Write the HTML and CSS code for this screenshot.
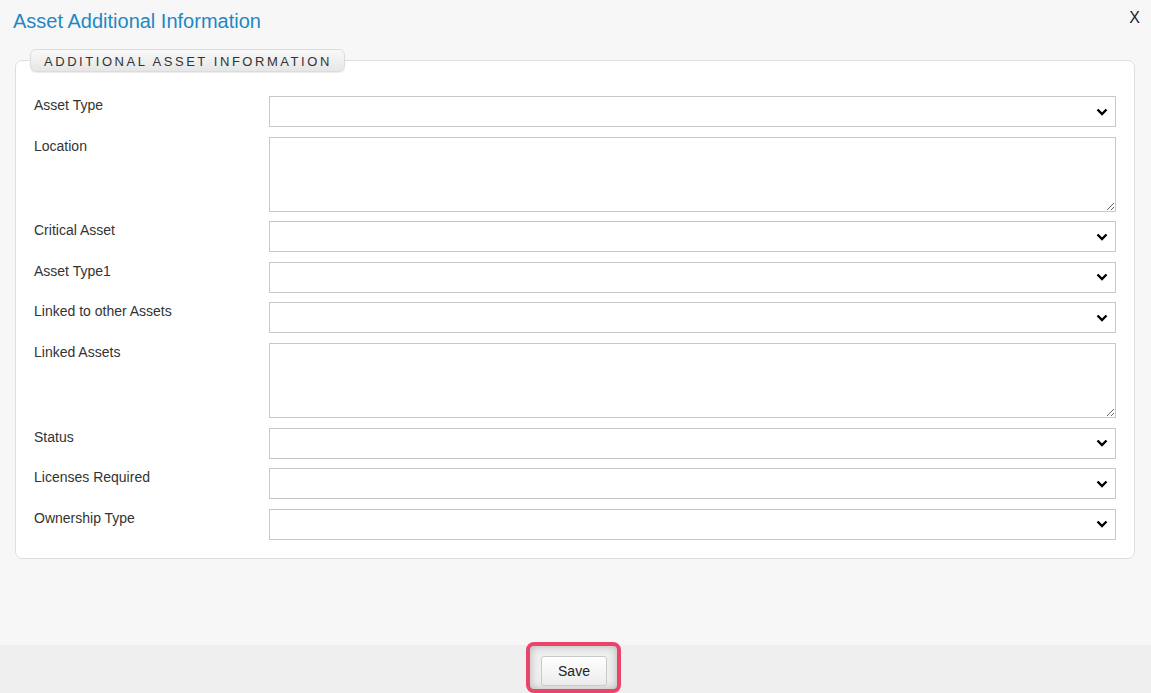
FILE: index.html
```html
<!DOCTYPE html>
<html lang="en">
<head>
    <meta charset="UTF-8">
    <title>Asset Additional Information</title>
    <link rel="stylesheet" href="styles.css">
</head>
<body>
    <div class="dialog">
        <div class="dialog-header">
            <h1 class="dialog-title">Asset Additional Information</h1>
            <span class="close">X</span>
        </div>

        <div class="dialog-body">
            <fieldset class="group">
                <legend>Additional Asset Information</legend>

                <div class="row">
                    <label>Asset Type</label>
                    <select><option></option></select>
                </div>
                <div class="row">
                    <label>Location</label>
                    <textarea></textarea>
                </div>
                <div class="row">
                    <label>Critical Asset</label>
                    <select><option></option></select>
                </div>
                <div class="row">
                    <label>Asset Type1</label>
                    <select><option></option></select>
                </div>
                <div class="row">
                    <label>Linked to other Assets</label>
                    <select><option></option></select>
                </div>
                <div class="row">
                    <label>Linked Assets</label>
                    <textarea></textarea>
                </div>
                <div class="row">
                    <label>Status</label>
                    <select><option></option></select>
                </div>
                <div class="row">
                    <label>Licenses Required</label>
                    <select><option></option></select>
                </div>
                <div class="row">
                    <label>Ownership Type</label>
                    <select><option></option></select>
                </div>
            </fieldset>
        </div>

        <!-- pie con el boton de guardar -->
        <div class="dialog-footer">
            <span class="highlight">
                <button type="button">Save</button>
            </span>
        </div>
    </div>
</body>
</html>
```

FILE: styles.css
```css
/* Dialogo de informacion adicional */
body {
    margin: 0;
    font-family: "Liberation Sans", Arial, sans-serif;
    color: #333;
    background: #f7f7f7;
}
.dialog {
    height: 693px;
    display: flex;
    flex-direction: column;
    overflow: hidden;
}
.dialog-header {
    display: flex;
    justify-content: space-between;
    align-items: flex-start;
    padding: 9px 11px 0 13px;
    height: 49px;
    box-sizing: border-box;
}
.dialog-title {
    margin: 0;
    font-size: 20px;
    font-weight: normal;
    color: #1e88c4;
    line-height: 24px;
}
.close {
    font-size: 16px;
    color: #222;
    line-height: 16px;
    margin-top: 1px;
}
.dialog-body {
    flex: 1;
    padding: 0 16px 0 15px;
}
.group {
    margin: 0;
    padding: 10px 18px 18px 18px;
    border: 1px solid #dedede;
    border-radius: 7px;
    background: #fff;
}
.group legend {
    margin-left: -4px;
    padding: 0 12px 0 13px;
    height: 23px;
    line-height: 23px;
    box-sizing: border-box;
    font-size: 13px;
    letter-spacing: 2.55px;
    text-transform: uppercase;
    color: #333;
    border: 1px solid #dcdcdc;
    border-radius: 6px;
    background: linear-gradient(#f9f9f9, #e6e6e6);
    box-shadow: 0 1px 1px rgba(0, 0, 0, 0.08);
}
.row {
    display: flex;
    align-items: flex-start;
    margin-top: 9.6px;
}
.row:first-of-type {
    margin-top: 14px;
}
.row label {
    width: 235px;
    flex: none;
    font-size: 14px;
    line-height: 16px;
    padding-top: 1px;
}
.row select,
.row textarea {
    flex: 1;
    margin: 0;
    border: 1px solid #c8c8c8;
    border-radius: 0;
    background-color: #fff;
    font-family: inherit;
    font-size: 14px;
    box-sizing: border-box;
}
.row select {
    height: 31px;
    -webkit-appearance: none;
    appearance: none;
    background-image: url("data:image/svg+xml;utf8,<svg xmlns='http://www.w3.org/2000/svg' width='12' height='8' viewBox='0 0 12 8'><path d='M1.5 1.5 L6 6 L10.5 1.5' fill='none' stroke='black' stroke-width='2.4'/></svg>");
    background-repeat: no-repeat;
    background-position: right 7px center;
}
.row textarea {
    height: 75px;
    resize: vertical;
}
.dialog-footer {
    height: 48px;
    flex: none;
    background: #efefef;
    display: flex;
    justify-content: center;
    align-items: flex-start;
}
.highlight {
    margin-top: -3px;
    margin-left: -4px;
    padding: 10px 10px 3px 11px;
    border: 4px solid #e9446a;
    border-radius: 8px;
    box-shadow: inset 0 0 8px rgba(0, 0, 0, 0.25);
}
.highlight button {
    display: block;
    width: 66px;
    height: 30px;
    font-family: inherit;
    font-size: 14px;
    color: #222;
    border: 1px solid #c9c9c9;
    border-radius: 3px;
    background: linear-gradient(#fff, #ececec);
}
```
